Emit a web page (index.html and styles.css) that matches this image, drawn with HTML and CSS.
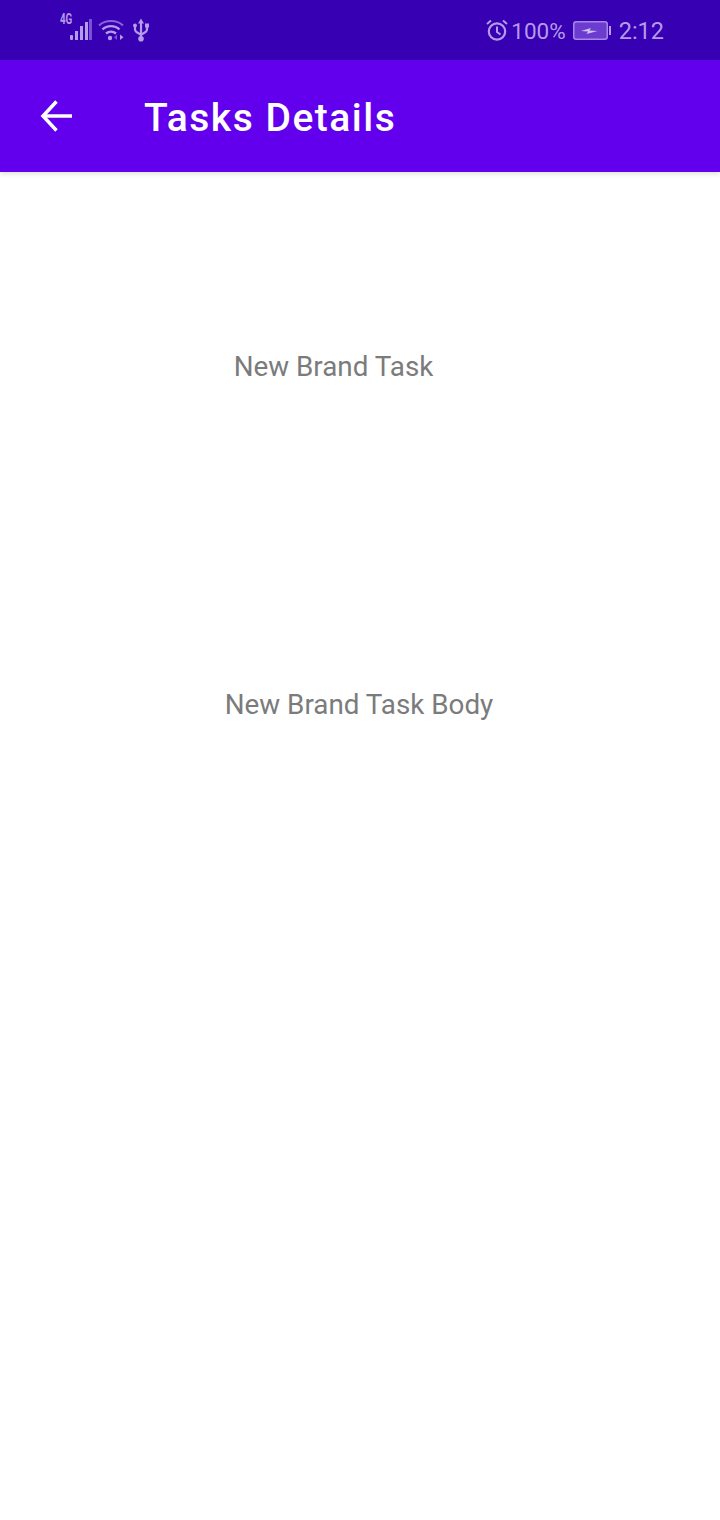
FILE: index.html
```html
<html>

<head>
    <title>Tasks Details</title>
    <link rel="stylesheet" href="styles.css">
</head>

<body>
    <div class="status-bar">
        <div class="status-left">
            <span class="net-label">4G</span>
            <svg class="signal" width="22" height="22" viewBox="0 0 22 22">
                <rect x="0" y="16" width="3" height="5" rx="1" fill="#b59bea" />
                <rect x="5" y="12" width="3" height="9" fill="#b59bea" />
                <rect x="10" y="7" width="3" height="14" fill="#b59bea" />
                <rect x="15" y="3" width="3" height="18" fill="#b59bea" />
                <rect x="19" y="0" width="3" height="21" fill="#7a50d4" />
            </svg>
            <svg class="wifi" width="26" height="22" viewBox="0 0 26 22" fill="none" stroke="#b59bea">
                <path d="M1 6.500C7 .5 19 .5 25 6.500" stroke-width="2" stroke="#8a63dc" />
                <path d="M4.500 10.500C9 6 17 6 21.500 10.500" stroke-width="2.400" />
                <path d="M8 14.500C11 12 15 12 18 14.500" stroke-width="2.400" />
                <circle cx="12" cy="19" r="2.200" fill="#b59bea" stroke="none" />
                <path d="M19 15.500l-3 2.800 3 2.700z" fill="#7a50d4" stroke="none" />
                <path d="M22 15.500l3.500 2.800-3.500 2.700z" fill="#b59bea" stroke="none" />
            </svg>
            <svg class="usb" width="16" height="24" viewBox="0 0 16 24" fill="none" stroke="#b59bea" stroke-width="2.200">
                <path d="M8 3v18" />
                <path d="M5 5.500L8 .5l3 5z" fill="#b59bea" stroke="none" />
                <circle cx="8" cy="20.800" r="2.800" fill="#b59bea" stroke="none" />
                <path d="M2 9v2.500c0 2.500 2 3 6 5c4-2 6-2.500 6-5V9" />
                <rect x="0" y="5.500" width="4" height="4" rx="2" fill="#b59bea" stroke="none" />
                <rect x="12" y="5.500" width="4" height="4" fill="#b59bea" stroke="none" />
            </svg>
        </div>
        <div class="status-right">
            <svg class="alarm" width="22" height="22" viewBox="0 0 22 22" fill="none" stroke="#b59bea" stroke-width="2.200">
                <circle cx="11" cy="12.500" r="8.200" />
                <path d="M11 7.500v5.500l3.500 2.500" stroke-width="2" />
                <path d="M1 5l4-3.500M21 5l-4-3.500" stroke-width="2" />
            </svg>
            <span class="status-text">100%</span>
            <svg class="battery" width="38" height="20" viewBox="0 0 38 20">
                <rect x="0.750" y="0.750" width="33.500" height="17.500" rx="2.500" fill="#6b3ccf" stroke="#a688e6" stroke-width="1.500" />
                <path d="M8 10l10-3-1.500 2.500 8 .5-11 3 1.500-2.500z" fill="#cfc0f2" />
                <rect x="36" y="5" width="2" height="9" fill="#b59bea" />
            </svg>
            <span class="status-text clock">2:12</span>
        </div>
    </div>

    <div class="app-bar">
        <svg class="back" width="32" height="32" viewBox="0 0 32 32" fill="none" stroke="#fff" stroke-width="3.500">
            <path d="M32 16H3" />
            <path d="M16.500 1.500L3 16l13.500 14.500" />
        </svg>
        <span class="app-title">Tasks Details</span>
    </div>

    <div class="content">
        <p class="task-title">New Brand Task</p>
        <p class="task-body">New Brand Task Body</p>
    </div>
</body>

</html>
```

FILE: styles.css
```css
body {
    font-family: Roboto, "Liberation Sans", sans-serif;
    background-color: #fff;
    margin: 0;
    padding: 0;
}

.status-bar {
    height: 60px;
    background-color: #3700b3;
    display: flex;
    align-items: center;
    justify-content: space-between;
    padding: 0 56px 0 60px;
    color: #b59bea;
}

.status-left {
    display: flex;
    align-items: center;
}

.net-label {
    font-size: 14px;
    font-weight: 700;
    align-self: flex-start;
    margin-top: -7px;
    width: 10px;
    transform: scaleX(0.7);
    transform-origin: left center;
}

.signal {
    margin-right: 6px;
}

.wifi {
    margin-right: 9px;
}

.status-right {
    display: flex;
    align-items: center;
}

.status-text {
    font-size: 22.5px;
    margin-top: 2px;
}

.clock {
    font-size: 23.5px;
}

.alarm {
    margin-right: 3px;
}

.battery {
    margin: 2px 8px 0 7px;
}

.app-bar {
    height: 112px;
    background-color: #6200ee;
    display: flex;
    align-items: center;
    padding-left: 40px;
    box-shadow: 0 2px 5px rgba(0, 0, 0, 0.12);
}

.back {
    margin-right: 72px;
}

.app-title {
    color: #fff;
    font-size: 39px;
    font-weight: 500;
    letter-spacing: 1.5px;
    margin-top: 4px;
}

.content {
    text-align: center;
    font-size: 27.8px;
    color: #7b7b7b;
}

.task-title {
    margin: 178px 53px 0 0;
}

.task-body {
    margin: 305px 2px 0 0;
}
```
